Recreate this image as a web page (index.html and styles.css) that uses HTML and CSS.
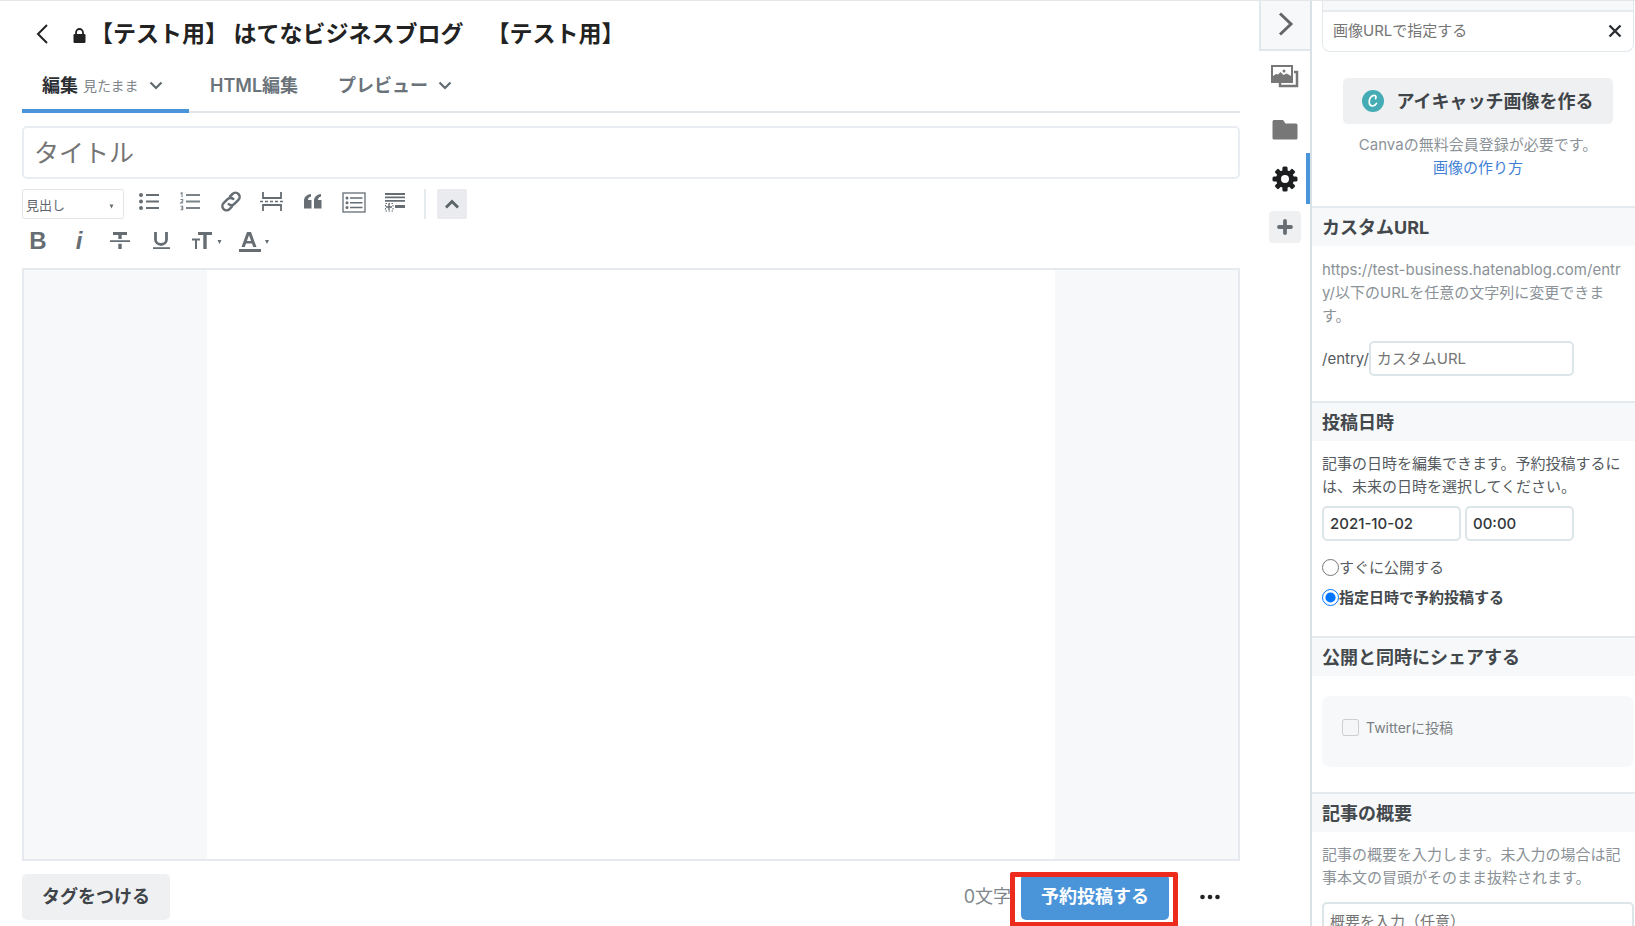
FILE: index.html
```html
<!DOCTYPE html>
<html lang="ja">
<head>
<meta charset="utf-8">
<meta name="viewport" content="width=device-width, initial-scale=1">
<title>記事を書く</title>
<link rel="stylesheet" href="styles.css">
</head>
<body>
<div class="app">
  <main class="main">
    <header class="blog-header">
      <a class="back" href="#" aria-label="戻る"><svg width="12" height="24" viewBox="0 0 12 24"><path d="M11 3 2 12l9 9" fill="none" stroke="#222" stroke-width="2"/></svg></a>
      <svg class="lock" width="13" height="15" viewBox="0 0 13 15"><path d="M3 7V4.5a3.5 3.5 0 0 1 7 0V7" fill="none" stroke="#222" stroke-width="1.8"/><rect x="0.5" y="6" width="12" height="9" rx="1.2" fill="#222"/></svg>
      <h1 class="blog-title">【テスト用】 はてなビジネスブログ　【テスト用】</h1>
    </header>
    <nav class="tabs">
      <a class="tab tab-active" href="#">編集<small>見たまま</small><svg class="chev" width="14" height="9" viewBox="0 0 14 9"><path d="m1.500 1.500 5.500 5.500 5.500-5.500" fill="none" stroke="#5f6a70" stroke-width="2.200"/></svg></a>
      <a class="tab" href="#">HTML編集</a>
      <a class="tab" href="#">プレビュー<svg class="chev" width="14" height="9" viewBox="0 0 14 9"><path d="m1.500 1.500 5.500 5.500 5.500-5.500" fill="none" stroke="#5f6a70" stroke-width="2.200"/></svg></a>
    </nav>
    <input class="title-input" type="text" placeholder="タイトル" aria-label="タイトル">
    <div class="toolbar">
      <div class="tool-row">
        <div class="heading-wrap">
          <select class="heading-select" aria-label="見出し"><option>見出し</option></select>
          <svg class="heading-caret" width="5" height="5" viewBox="0 0 5 5"><path d="M.5.500h4L2.500 4.500z" fill="#666e73"/></svg>
        </div>
        <button class="tool" aria-label="リスト"><svg width="24" height="24" viewBox="0 0 24 24" fill="#666e73"><circle cx="4" cy="5" r="2"/><circle cx="4" cy="11.500" r="2"/><circle cx="4" cy="18" r="2"/><path d="M9 4h13v2H9zM9 10.500h13v2H9zM9 17h13v2H9z"/></svg></button>
        <button class="tool" aria-label="番号付きリスト"><svg width="24" height="24" viewBox="0 0 24 24" fill="#7b8388"><path d="M8 4h14v2H8zM8 10.500h14v2H8zM8 17h14v2H8z"/><path d="m2.500 3.500 1.500-.8v4.500M2.500 9.500h2.200v1.500L2.700 13h2.500M2.500 16.200h2.200v3.600H2.500M3 18h1.700" fill="none" stroke="#7b8388" stroke-width="1.100"/></svg></button>
        <button class="tool" aria-label="リンク"><svg width="24" height="24" viewBox="0 0 24 24" fill="none" stroke="#666e73" stroke-width="2.500" stroke-linecap="round"><path d="M11 6.500 13.500 4a4.100 4.100 0 0 1 5.900 5.900l-4 4a4 4 0 0 1-5.700.2"/><path d="m13 16.500-2.500 2.600a4.100 4.100 0 0 1-5.900-5.900l4-4a4 4 0 0 1 5.700-.2"/></svg></button>
        <button class="tool" aria-label="続きを読む"><svg width="24" height="24" viewBox="0 0 24 24" fill="none" stroke="#666e73" stroke-width="1.800"><path d="M3 2v6h18V2M3 21v-6h18v6"/><path d="M0 11.500h24" stroke-dasharray="3 2" stroke-width="1.400"/></svg></button>
        <button class="tool" aria-label="引用"><svg width="24" height="24" viewBox="0 0 24 24" fill="#666e73"><path d="M10 4v2.500C8 7 7 8 7 10h3.500v8.500H3V11c0-4 2.500-6.500 7-7zM20 4v2.500c-2 .5-3 1.500-3 3.500h3.500v8.500H13V11c0-4 2.500-6.500 7-7z"/></svg></button>
        <button class="tool" aria-label="目次"><svg width="24" height="24" viewBox="0 0 24 24" fill="#666e73"><rect x="1" y="3" width="22" height="19" fill="none" stroke="#666e73" stroke-width="1.300"/><circle cx="5" cy="8" r="1.500"/><circle cx="5" cy="12.700" r="1.500"/><circle cx="5" cy="17.500" r="1.500"/><path d="M8 7.300h12.500v1.500H8zM8 12h12.500v1.500H8zM8 16.800h12.500v1.500H8z"/></svg></button>
        <button class="tool" aria-label="脚注"><svg width="24" height="24" viewBox="0 0 24 24" fill="#666e73"><path d="M2 3h20v2H2zM2 6.500h20v1.800H2zM2 10h20v1.800H2zM12 15h10v3H12z"/><path d="M6 14v6M3 17h6" stroke="#666e73" stroke-width="1.400"/><path d="M2.500 13.500h7.500v7.500H2.500z" fill="none" stroke="#666e73" stroke-width="1.100" stroke-dasharray="1.500 1.500"/></svg></button>
        <span class="separator"></span>
        <button class="collapse" aria-label="折りたたむ"><svg width="16" height="10" viewBox="0 0 16 10"><path d="m2 8.500 6-6 6 6" fill="none" stroke="#5a6368" stroke-width="2.800"/></svg></button>
      </div>
      <div class="tool-row format-row">
        <button class="tool bold">B</button>
        <button class="tool italic">i</button>
        <button class="tool" aria-label="打ち消し線"><svg width="24" height="24" viewBox="0 0 24 24" fill="#666e73"><path d="M5 3h14v3h-5.300v4h-3.400V6H5zM2 11.300h20v1.800H2zM10.300 14.800h3.400V20h-3.400z"/></svg></button>
        <button class="tool" aria-label="下線"><svg width="24" height="24" viewBox="0 0 24 24"><path d="M6.500 3v7.500a5.500 5 0 0 0 11 0V3" fill="none" stroke="#666e73" stroke-width="2.800"/><path d="M4 18.200h17V20H4z" fill="#666e73"/></svg></button>
        <button class="tool" aria-label="文字サイズ"><svg width="32" height="24" viewBox="0 0 32 24" fill="#666e73"><path d="M8 3h14v3h-5.300v14h-3.400V6H8zM2 9.500h8v2H7V20H5v-8.500H2zM27.500 11h4l-2 4z"/></svg></button>
        <button class="tool" aria-label="文字色"><svg width="36" height="24" viewBox="4 0 36 24" fill="#666e73"><path fill-rule="evenodd" d="M12 3h4l5.500 15h-3.300L17 14.500h-6L9.800 18H6.500zM14 6.200 11.900 12h4.200zM4 20h22v3H4zM30 11h4l-2 4z"/></svg></button>
      </div>
    </div>
    <div class="editor"><div class="page" contenteditable="true" role="textbox" aria-label="本文"></div></div>
    <footer class="footer">
      <button class="btn btn-gray">タグをつける</button>
      <span class="count">0文字</span>
      <div class="highlight"><button class="btn btn-primary">予約投稿する</button></div>
      <button class="more" aria-label="その他"><svg width="20" height="6" viewBox="0 0 20 6" fill="#222"><circle cx="2.500" cy="3" r="2.300"/><circle cx="10" cy="3" r="2.300"/><circle cx="17.500" cy="3" r="2.300"/></svg></button>
    </footer>
  </main>
  <nav class="rail">
    <button class="rail-toggle" aria-label="閉じる"><svg width="16" height="26" viewBox="0 0 16 26"><path d="m2 2.500 11 10.500L2 23.500" fill="none" stroke="#666" stroke-width="3"/></svg></button>
    <button class="rail-item" aria-label="写真"><svg width="28" height="24" viewBox="0 0 28 24" fill="none" stroke="#777"><rect x="1" y="1" width="20" height="16" stroke-width="2"/><path d="M23 7h3v14H9v-3" stroke-width="2.500"/><path d="M2 11l3-2 2 .5L9.500 7l3 3 3-1.500 2 1L20 11v5H2z" fill="#777" stroke="none"/><circle cx="13" cy="6" r="1.500" fill="#777" stroke="none"/></svg></button>
    <button class="rail-item rail-folder" aria-label="カテゴリー"><svg width="26" height="20" viewBox="0 0 26 20"><path d="M1.500 0H11l2.500 3.500H24A1.500 1.500 0 0 1 25.500 5v13A1.500 1.500 0 0 1 24 19.500H2A1.500 1.500 0 0 1 .5 18V1.200z" fill="#777"/></svg></button>
    <button class="rail-item rail-active" aria-label="編集オプション"><svg width="26" height="26" viewBox="-13 -13 26 26"><g fill="#1c1e20"><circle r="9"/><rect x="-2.600" y="-12.500" width="5.200" height="25" rx="1.500"/><rect x="-2.600" y="-12.500" width="5.200" height="25" rx="1.500" transform="rotate(45)"/><rect x="-2.600" y="-12.500" width="5.200" height="25" rx="1.500" transform="rotate(90)"/><rect x="-2.600" y="-12.500" width="5.200" height="25" rx="1.500" transform="rotate(135)"/></g><circle r="4" fill="#fff"/></svg></button>
    <button class="rail-plus" aria-label="追加"><svg width="16" height="16" viewBox="0 0 16 16"><path d="M8 2v12M2 8h12" stroke="#666e73" stroke-width="3.800" stroke-linecap="round"/></svg></button>
  </nav>
  <aside class="panel">
    <section class="eyecatch">
      <div class="url-box">
        <input type="text" placeholder="画像URLで指定する" aria-label="画像URLで指定する">
        <button class="clear" aria-label="閉じる"><svg width="14" height="14" viewBox="0 0 14 14"><path d="m1.500 1.500 11 11M12.500 1.500l-11 11" stroke="#2b2f33" stroke-width="2.400"/></svg></button>
      </div>
      <div class="canva">
        <button class="btn btn-gray canva-btn"><svg width="22" height="22" viewBox="0 0 22 22"><circle cx="11" cy="11" r="11" fill="#45acb5"/><path d="M13.600 8.500c.8-1.600.4-3.200-1.400-3.200-2.600 0-5 3-5 6.300 0 2.600 1.300 4.400 3.400 4.400 1.700 0 3.100-1.100 3.900-2.600" fill="none" stroke="#fff" stroke-width="1.700" stroke-linecap="round"/></svg>アイキャッチ画像を作る</button>
        <p class="muted">Canvaの無料会員登録が必要です。<br><a href="#">画像の作り方</a></p>
      </div>
    </section>
    <h2 class="section-title">カスタムURL</h2>
    <section class="section custom-url">
      <p class="muted break">https://test-business.hatenablog.com/entry/以下のURLを任意の文字列に変更できます。</p>
      <div class="entry-row"><label for="slug">/entry/</label><input id="slug" class="field slug" type="text" placeholder="カスタムURL"></div>
    </section>
    <h2 class="section-title">投稿日時</h2>
    <section class="section schedule">
      <p>記事の日時を編集できます。予約投稿するには、未来の日時を選択してください。</p>
      <div class="date-row">
        <input class="field date" type="text" value="2021-10-02" aria-label="日付">
        <input class="field time" type="text" value="00:00" aria-label="時刻">
      </div>
      <label class="radio"><input type="radio" name="when">すぐに公開する</label>
      <label class="radio radio-on"><input type="radio" name="when" checked>指定日時で予約投稿する</label>
    </section>
    <h2 class="section-title">公開と同時にシェアする</h2>
    <section class="section share">
      <div class="share-card"><label class="check"><input type="checkbox" disabled>Twitterに投稿</label></div>
    </section>
    <h2 class="section-title">記事の概要</h2>
    <section class="section summary">
      <p class="muted">記事の概要を入力します。未入力の場合は記事本文の冒頭がそのまま抜粋されます。</p>
      <textarea class="field" placeholder="概要を入力（任意）" aria-label="概要"></textarea>
    </section>
  </aside>
</div>
</body>
</html>
```

FILE: styles.css
```css
* { box-sizing: border-box; }

body {
  margin: 0;
  font-family: Inter, "Noto Sans CJK JP", sans-serif;
  font-size: 15px;
  line-height: 23px;
  color: #555b60;
  background: #fff;
}

button, input, select, textarea { font: inherit; color: inherit; margin: 0; }
button { border: 0; padding: 0; background: none; cursor: pointer; }
a { text-decoration: none; }
p, h1, h2 { margin: 0; }
svg { display: block; flex: none; }

.app {
  display: flex;
  height: 100vh;
  overflow: hidden;
  border-top: 1px solid #e4e6e8;
}

.main {
  flex: 1;
  min-width: 0;
  display: flex;
  flex-direction: column;
  padding: 0 19px 0 22px;
}

/* Header and tabs */
.blog-header {
  display: flex;
  align-items: center;
  height: 66px;
  padding-left: 14px;
}
.lock { margin: 2px 4px 0 25px; }
.blog-title {
  font-size: 23px;
  line-height: 32px;
  font-weight: 700;
  color: #222;
  white-space: nowrap;
  text-spacing-trim: space-all;
}

.tabs {
  display: flex;
  height: 46px;
  border-bottom: 2px solid #dfe5e9;
}
.tab {
  display: flex;
  align-items: center;
  height: 46px;
  padding: 0 20px 9px;
  font-size: 18px;
  font-weight: 600;
  color: #6a7379;
}
.tab small { font-size: 14px; font-weight: 400; margin-left: 5px; }
.chev { margin-left: 10px; }
.tab-active { width: 167px; margin-right: 1px; padding: 0 0 5px 20px; color: #2b2f33; border-bottom: 4px solid #4a94da; }
.tab-active small { color: #7f878c; }

.title-input {
  height: 53px;
  margin-top: 13px;
  padding: 0 10px;
  border: 2px solid #e9edf1;
  border-radius: 5px;
  font-size: 25px;
  outline: 0;
}
::placeholder { color: #757575; opacity: 1; }

/* Toolbar */
.toolbar { padding: 10px 0; }
.tool-row { display: flex; align-items: flex-start; gap: 17px; height: 32px; }
.format-row { margin-top: 7px; padding-left: 4px; height: 30px; }
.heading-wrap { position: relative; width: 102px; margin-right: -4px; }
.heading-select {
  width: 100%;
  height: 30px;
  padding: 2px 3px 0;
  border: 1px solid #e1e6ea;
  border-radius: 2px;
  background: #fff;
  font-size: 13px;
  color: #5f666b;
  appearance: none;
}
.heading-caret { position: absolute; right: 10px; top: 15px; }
.tool {
  display: flex;
  align-items: center;
  justify-content: center;
  min-width: 24px;
  height: 24px;
  margin-top: 1px;
  color: #666e73;
}
.bold { font: 700 24px/24px "Liberation Sans", sans-serif; }
.italic { font: italic 700 24px/24px "Liberation Sans", sans-serif; }
.separator { width: 2px; height: 30px; background: #e6ebee; }
.collapse {
  display: flex;
  align-items: center;
  justify-content: center;
  width: 30px;
  height: 30px;
  margin-left: -6px;
  border-radius: 2px;
  background: #e9ebee;
}

/* Editor */
.editor {
  flex: 1;
  display: flex;
  padding: 0 15%;
  border: 2px solid #e6eaee;
  background: #f6f8fa;
}
.page { flex: 1; background: #fff; outline: 0; }

/* Footer */
.footer { display: flex; align-items: center; height: 65px; padding-top: 6px; }
.btn {
  height: 46px;
  padding: 0 20px;
  border-radius: 5px;
  font-size: 18px;
  font-weight: 700;
}
.btn-gray { background: #eff0f2; color: #3f4448; }
.btn-primary { background: #4a94da; color: #fff; }
.count { margin-left: auto; font-size: 18px; color: #7f878c; }
.highlight { position: relative; margin-left: 10px; }
.highlight::after {
  content: "";
  position: absolute;
  inset: -2px -9px -7px -11px;
  border: 5px solid #ed2b1c;
  border-radius: 2px;
  pointer-events: none;
}
.more { margin: 0 20px 0 31px; }

/* Rail */
.rail {
  width: 53px;
  display: flex;
  flex-direction: column;
  align-items: center;
  border-right: 2px solid #d8e1e5;
}
.rail-toggle {
  display: flex;
  align-items: center;
  justify-content: center;
  width: 100%;
  height: 50px;
  padding-bottom: 2px;
  border: solid #e1e8ec;
  border-width: 0 0 2px 2px;
  background: #f6f8fa;
}
.rail-item {
  display: flex;
  align-items: center;
  justify-content: center;
  width: 100%;
  height: 51px;
}
.rail-folder { padding-top: 4px; }
.rail-active { border-right: 4px solid #4a94da; padding-left: 4px; }
.rail-plus {
  display: flex;
  align-items: center;
  justify-content: center;
  width: 32px;
  height: 32px;
  margin-top: 7px;
  border-radius: 4px;
  background: #eff0f2;
}

/* Settings panel */
.panel { width: 323px; overflow: hidden; }
.eyecatch { height: 205px; padding: 0 1px 0 10px; }
.url-box {
  display: flex;
  align-items: center;
  height: 51px;
  padding: 0 11px 0 10px;
  border: 1px solid #e1e8ec;
  border-top: 0;
  border-radius: 0 0 8px 8px;
  box-shadow: inset 0 9px #f6f8fa, inset 0 11px #e6ebee;
}
.url-box input {
  flex: 1;
  min-width: 0;
  height: 40px;
  margin-top: 9px;
  padding: 0;
  border: 0;
  outline: 0;
  background: none;
}
.clear { margin-top: 10px; }
.canva { padding-top: 26px; text-align: center; }
.canva-btn {
  display: inline-flex;
  align-items: center;
  gap: 12px;
  padding: 0 19px;
}
.canva .muted { margin-top: 9px; }
.muted { color: #8b9297; }
.muted a { color: #3f7fd6; }

.section-title {
  height: 40px;
  padding: 2px 10px 0;
  border-top: 2px solid #e4eaed;
  background: #f6f8fa;
  font-size: 18px;
  line-height: 36px;
  font-weight: 700;
  color: #43484c;
}
.section { padding: 12px 1px 0 10px; }
.section > p { padding-right: 8px; }
.break { word-break: break-all; }
.field {
  height: 35px;
  padding: 0 6px;
  border: 2px solid #dce5e8;
  border-radius: 5px;
  background: #fff;
  outline: 0;
}
.custom-url { height: 155px; }
.entry-row { display: flex; align-items: center; margin-top: 14px; }
.slug { width: 205px; }

.schedule { height: 195px; padding-top: 11px; }
.date-row { display: flex; gap: 4px; margin-top: 8px; color: #33373a; font-weight: 500; }
.date { width: 139px; }
.time { width: 109px; }
.radio { display: flex; align-items: center; height: 30px; }
.date-row + .radio { margin-top: 11px; }
.radio input { width: 17px; height: 17px; }
.radio-on { font-weight: 600; color: #43484c; }

.share { height: 116px; padding-top: 20px; }
.share-card { height: 71px; padding: 20px; border-radius: 8px; background: #f6f8fa; }
.check { display: flex; align-items: center; gap: 7px; font-size: 14px; color: #7a7f83; }
.check input { width: 17px; height: 17px; }

.summary { padding-top: 11px; }
.summary textarea { display: block; width: 100%; height: 80px; margin-top: 13px; padding: 6px; resize: none; }
```
